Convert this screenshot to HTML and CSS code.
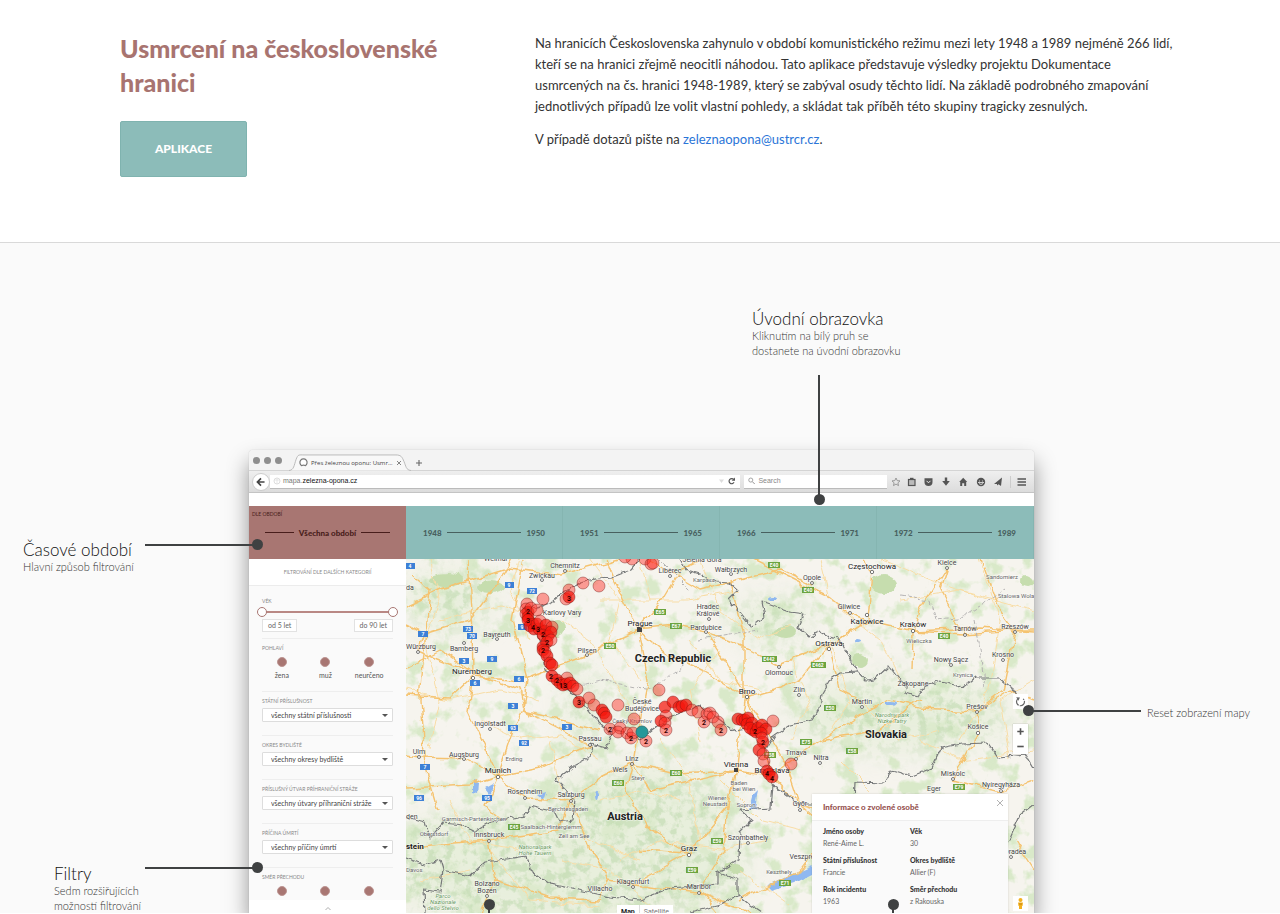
FILE: index.html
```html
<!DOCTYPE html>
<html lang="cs">
<head>
<meta charset="utf-8">
<title>Usmrcení na československé hranici</title>
<link rel="stylesheet" href="styles.css">
</head>
<body>
<header class="intro">
  <div class="intro-side">
    <h1>Usmrcení na československé hranici</h1>
    <a class="app-button" href="#aplikace">APLIKACE</a>
  </div>
  <div class="intro-text">
    <p>Na hranicích Československa zahynulo v období komunistického režimu mezi lety 1948 a 1989 nejméně 266 lidí,<br>
    kteří se na hranici zřejmě neocitli náhodou. Tato aplikace představuje výsledky projektu Dokumentace<br>
    usmrcených na čs. hranici 1948-1989, který se zabýval osudy těchto lidí. Na základě podrobného zmapování<br>
    jednotlivých případů lze volit vlastní pohledy, a skládat tak příběh této skupiny tragicky zesnulých.</p>
    <p>V případě dotazů pište na <a href="mailto:zeleznaopona@ustrcr.cz">zeleznaopona@ustrcr.cz</a>.</p>
  </div>
</header>

<main class="scene" id="aplikace">
  <div class="browser">
    <div class="tabbar">
      <span class="light"></span><span class="light"></span><span class="light"></span>
      <div class="tab">
        <svg class="tab-shape" viewBox="0 0 122 18" preserveAspectRatio="none"><path d="M0 17.5C5 17 5 12 7 6S10 1 15 1H107C112 1 113 3 115 8S117 17 122 17.5" fill="#f8f8f8" stroke="#b9b9b9"/></svg>
        <svg class="tab-icon" viewBox="0 0 10 10"><path d="M3 8.500A4 4 0 1 1 7 8.500L5 7.800Z" fill="#fff" stroke="#777" stroke-width="1.300"/></svg>
        <span class="tab-title">Přes železnou oponu: Usmr...</span>
        <svg class="tab-close" viewBox="0 0 6 6"><path d="M1 1L5 5M5 1L1 5" stroke="#777" stroke-width=".9"/></svg>
      </div>
      <svg class="tab-new" viewBox="0 0 8 8"><path d="M4 1V7M1 4H7" stroke="#666" stroke-width="1.100"/></svg>
    </div>
    <div class="toolbar">
      <button class="back" aria-label="Back"><svg viewBox="0 0 18 18"><path d="M9 5L5 9L9 13M5.500 9H13" fill="none" stroke="#444" stroke-width="1.900"/></svg></button>
      <div class="address">
        <svg viewBox="0 0 8 8"><circle cx="4" cy="4" r="3" fill="none" stroke="#ddd"/><path d="M1.500 3H6M4 1.500V6.500" stroke="#ddd" stroke-width=".7"/></svg>
        <span class="url">mapa.<b>zelezna-opona.cz</b></span>
        <svg class="end" viewBox="0 0 20 10"><path d="M2 3.500H7L4.500 7Z" fill="#ddd"/><path d="M16.700 3.500A2.600 2.600 0 1 0 17 6.300" fill="none" stroke="#555" stroke-width="1.200"/><path d="M18 1.500V4.800H14.700Z" fill="#555"/></svg>
      </div>
      <label class="search">
        <svg viewBox="0 0 8 8"><circle cx="3" cy="3" r="2.200" fill="none" stroke="#888" stroke-width=".8"/><path d="M4.800 4.800L7.300 7.300" stroke="#888"/></svg>
        <input type="text" placeholder="Search" aria-label="Search">
      </label>
      <svg class="tools" viewBox="0 0 144 20" fill="#555">
        <path d="M9 6L10.200 8.600L13 8.900L10.900 10.800L11.500 13.600L9 12.100L6.500 13.600L7.100 10.800L5 8.900L7.800 8.600Z" fill="none" stroke="#888" stroke-width=".8"/>
        <rect x="21.500" y="7.500" width="6.500" height="6" fill="#bbb" stroke="#555" stroke-width="1.200"/><rect x="23" y="5.800" width="3.500" height="2"/>
        <path d="M37.500 6.200H45.500V10A4 4 0 0 1 37.500 10Z"/><path d="M39.500 8.800L41.500 10.800L43.500 8.800" fill="none" stroke="#eee"/>
        <path d="M57.800 5.500H60.200V9H62.800L59 13.800L55.200 9H57.800Z"/>
        <path d="M72.200 10L76.200 5.800L80.200 10H79.200V14H77.200V11.200H75.200V14H73.200V10Z"/>
        <circle cx="94" cy="10" r="4.200"/><path d="M91 10.500H97M92.500 8.500V9.500M95.500 8.500V9.500M92 11.500Q94 13.500 96 11.500" stroke="#eee" stroke-width=".8" fill="none"/>
        <path d="M107 12L115 5.500L114 14L111.500 12.200L110 13.500V12Z"/>
        <path d="M123.500 4V16" stroke="#ccc"/>
        <path d="M130.500 7H139M130.500 10H139M130.500 13H139" stroke="#555" stroke-width="1.400"/>
      </svg>
    </div>
    <div class="white-strip"></div>

    <nav class="periods">
      <button class="period all"><small>DLE OBDOBÍ</small><i></i><b>Všechna období</b><i></i></button>
      <button class="period"><b>1948</b><i></i><b>1950</b></button>
      <button class="period"><b>1951</b><i></i><b>1965</b></button>
      <button class="period"><b>1966</b><i></i><b>1971</b></button>
      <button class="period"><b>1972</b><i></i><b>1989</b></button>
    </nav>

    <div class="work">
      <aside class="filters">
        <h2>FILTROVÁNÍ DLE DALŠÍCH KATEGORIÍ</h2>
        <div class="groups">
          <section class="group age">
            <h3>VĚK</h3>
            <div class="slider">
              <input type="range" min="5" max="90" value="5" aria-label="Věk od">
              <input type="range" min="5" max="90" value="90" aria-label="Věk do">
            </div>
            <div class="age-values"><span>od 5 let</span><span>do 90 let</span></div>
          </section>
          <section class="group">
            <h3>POHLAVÍ</h3>
            <div class="dots">
              <label><input type="checkbox" checked>žena</label>
              <label><input type="checkbox" checked>muž</label>
              <label><input type="checkbox" checked>neurčeno</label>
            </div>
          </section>
          <section class="group pick">
            <h3><label for="f1">STÁTNÍ PŘÍSLUŠNOST</label></h3>
            <select id="f1"><option>všechny státní příslušnosti</option></select>
          </section>
          <section class="group pick">
            <h3><label for="f2">OKRES BYDLIŠTĚ</label></h3>
            <select id="f2"><option>všechny okresy bydliště</option></select>
          </section>
          <section class="group pick">
            <h3><label for="f3">PŘÍSLUŠNÝ ÚTVAR PŘÍHRANIČNÍ STRÁŽE</label></h3>
            <select id="f3"><option>všechny útvary příhraniční stráže</option></select>
          </section>
          <section class="group pick">
            <h3><label for="f4">PŘÍČINA ÚMRTÍ</label></h3>
            <select id="f4"><option>všechny příčiny úmrtí</option></select>
          </section>
          <section class="group last">
            <h3>SMĚR PŘECHODU</h3>
            <div class="dots">
              <label><input type="checkbox" checked aria-label="Směr 1"></label>
              <label><input type="checkbox" checked aria-label="Směr 2"></label>
              <label><input type="checkbox" checked aria-label="Směr 3"></label>
            </div>
          </section>
        </div>
        <button class="more" aria-label="Více"><svg viewBox="0 0 8 5"><path d="M1.500 4L4 1.500L6.500 4" fill="none" stroke="#999" stroke-width=".8"/></svg></button>
      </aside>

      <div class="map">
        <svg class="map-art" viewBox="406 559 628 354" preserveAspectRatio="xMidYMid slice">
          <defs>
            <filter id="rough" x="-5%" y="-5%" width="110%" height="110%" color-interpolation-filters="sRGB"><feTurbulence type="fractalNoise" baseFrequency=".06" numOctaves="3" seed="4"/><feDisplacementMap in="SourceGraphic" scale="9" xChannelSelector="R" yChannelSelector="G"/></filter>
            <filter id="jag" x="-5%" y="-5%" width="110%" height="110%" color-interpolation-filters="sRGB"><feTurbulence type="fractalNoise" baseFrequency=".15" numOctaves="2" seed="8"/><feDisplacementMap in="SourceGraphic" scale="6" xChannelSelector="R" yChannelSelector="G"/></filter>
            <filter id="woods" x="0" y="0" width="100%" height="100%" color-interpolation-filters="sRGB"><feTurbulence type="fractalNoise" baseFrequency=".05" numOctaves="4" seed="12"/><feColorMatrix values="0 0 0 0 .78  0 0 0 0 .89  0 0 0 0 .7  6 0 0 0 -3.2"/></filter>
            <filter id="relief" x="0" y="0" width="100%" height="100%" color-interpolation-filters="sRGB"><feTurbulence type="fractalNoise" baseFrequency=".11" numOctaves="4" seed="3"/><feColorMatrix values="0 0 0 0 .74  0 0 0 0 .85  0 0 0 0 .68  5 0 0 0 -2.300"/></filter>
            <filter id="soft"><feGaussianBlur stdDeviation="14"/></filter>
            <mask id="hills"><g fill="#fff" filter="url(#soft)"><ellipse cx="560" cy="865" rx="190" ry="62"/><ellipse cx="450" cy="600" rx="45" ry="30"/><ellipse cx="900" cy="715" rx="110" ry="36"/><ellipse cx="640" cy="810" rx="90" ry="45"/><ellipse cx="585" cy="710" rx="18" ry="40"/><ellipse cx="770" cy="620" rx="40" ry="20"/></g></mask>
          </defs>
          <rect x="406" y="559" width="628" height="354" fill="#f6f4ee"/>
          <rect x="406" y="559" width="628" height="354" filter="url(#woods)" opacity=".6"/>
          <g mask="url(#hills)"><rect x="406" y="559" width="628" height="354" fill="#dfebd1" opacity=".6"/><rect x="406" y="559" width="628" height="354" filter="url(#relief)" opacity=".6"/></g>
          <g fill="#c6ddae" filter="url(#rough)">
            <ellipse cx="447" cy="580" rx="17" ry="8"/><ellipse cx="490" cy="588" rx="14" ry="7"/><ellipse cx="884" cy="585" rx="13" ry="9"/><ellipse cx="556" cy="628" rx="8" ry="8"/><ellipse cx="860" cy="661" rx="8" ry="7"/><ellipse cx="734" cy="868" rx="10" ry="5"/><ellipse cx="1027" cy="582" rx="7" ry="5"/><ellipse cx="785" cy="632" rx="12" ry="6"/>
          </g>
          <g fill="#8fb8f0" filter="url(#rough)"><path d="M759 791L753 797L750 808L756 806Z"/><path d="M766 886L790 874L814 864V872L792 883L770 890Z"/><path d="M536 793L546 790L543 799Z"/><path d="M474 782L479 784L478 795L474 794ZM484 788L493 783L488 793Z"/><ellipse cx="858" cy="641" rx="4" ry="2"/><ellipse cx="891" cy="704" rx="5" ry="2"/><ellipse cx="596" cy="795" rx="2" ry="5"/><ellipse cx="774" cy="598" rx="5" ry="2"/></g>
          <g class="minor" filter="url(#rough)">
            <path d="M406 690L450 700L500 690L540 700M430 559L440 600L425 640L440 700L430 750M480 720L520 740L560 735L600 760M560 620L590 640L620 690L640 720M600 600L640 600L690 600L740 590M690 640L720 680L760 690M700 560L720 610L760 640L790 625M820 559L830 600L880 640L900 680M900 600L960 590L1034 610M980 559L1000 620L990 690L960 740M860 700L900 740L940 730M840 760L870 790M660 740L690 780L700 840M620 860L660 840L720 850L770 840M720 780L760 820L800 830M450 800L470 840L520 850M550 740L560 790L590 840L640 860M640 560L650 600M440 620L500 605L540 620M880 559L930 580L990 600M740 870L790 905M490 850L530 900L600 905"/>
            <path d="M520 559L510 590L530 640M590 559L620 600L610 640L640 680M720 650L690 690L700 740M790 660L810 700L790 740M920 740L960 760L1034 750M1034 680L1000 700L1010 760M420 880L470 870M560 860L610 870L650 905M680 800L640 790L600 800M830 640L850 700L830 730"/>
          </g>
          <g class="major" filter="url(#rough)">
            <path d="M406 606L440 590L510 568L560 575L620 559M406 625L424 634L470 620L500 580L512 559M412 575L430 590L425 640L420 700L425 767L438 812M406 668L440 650L473 673L520 690L524 710M424 634L418 650L473 673L468 710L498 776M468 559L472 630L473 673M524 559L512 620L527 680L523 711L513 730L498 776M406 695L450 698L473 676L520 680L587 655L638 630"/>
            <path d="M406 755L419 757L464 758L498 776L540 768L590 745L523 711L600 730M498 776L470 785L406 788M498 776L485 805L500 820M498 776L525 798L571 800L600 778L632 763L676 773L736 770L772 775L800 804L854 820"/>
            <path d="M638 630L614 580L606 559M638 630L662 600L680 570L704 559M638 630L676 626L706 632L750 650L779 665L829 645L867 620M638 630L665 653L705 672L747 697L780 688L800 680L829 645M638 630L648 680L642 710L634 763M747 697L740 730L736 770L728 805L724 850L700 890L718 913M747 697L762 740L772 775L796 757L820 740L852 720L890 700L920 708L976 711L1010 690L1034 700"/>
            <path d="M750 559L790 578L830 598L850 614L867 620L913 631L964 634L1015 630L1034 630M872 572L868 620L829 645M872 572L860 559M947 567L920 610L913 631L912 670M947 567L940 590L965 634M982 559L1000 610L1015 631L1003 690L976 711L978 732L953 780M913 631L980 628L1034 632M744 700L744 640L730 580"/>
            <path d="M571 800L590 850L610 880L633 885L689 853L728 805M610 880L600 900M633 885L699 893L750 913M571 800L560 830L489 840L430 845L406 850M489 840L495 880L480 913M632 763L625 790L650 830L689 853L640 850M736 770L650 790L632 763M800 804L830 830L800 870L740 900"/>
            <path d="M650 560L700 590L780 570L812 585M953 780L1000 792L1034 780M820 740L880 730L920 700M862 700L840 690L829 645M1015 840L1034 870M706 632L747 697M600 900L550 898L495 880M800 804L785 760L747 697"/>
          </g>
          <g class="border" filter="url(#jag)">
            <path d="M527 607L537 608L552 602L560 595L580 582L600 578L612 577L630 570L640 559M680 559L686 570L700 574L715 582L730 583L738 590L728 600L740 612L752 627L765 617L762 602L790 612L804 614L798 627L810 637L820 631L830 637L840 640L848 655L858 672L866 681L874 680L889 666L898 678L907 682L905 693L918 697L924 687L940 681L955 684L962 688L975 678L1000 678L1012 688L1017 697"/>
            <path d="M859 672L840 673L830 680L822 694L820 708L812 720L790 725L775 735L766 750L772 785L785 793L800 804L854 804L855 782L885 783L892 770L912 776L932 768L941 748L960 744L988 743L998 758L1025 755L1034 770M773 785L771 808L740 810L752 820L740 832L739 860L718 872L718 884L670 888L640 900L610 897L550 884L530 870L527 856L485 862L470 876L443 870L440 860L425 865L406 858M443 870L440 892L424 890L425 913M718 872L738 880L738 895L750 905L762 913M1034 804L1020 815L1008 842M690 913L720 905L738 895"/>
            <path d="M406 817L425 822L430 838L443 823L462 825L475 831L490 822L525 816L530 806L555 812L560 822L573 820L575 800L556 780L575 765L590 757L592 744L606 748L612 735L592 715L580 700L545 670L540 640L527 607M612 728L640 740L668 718L700 705L735 731L770 725"/>
          </g>
          <path d="M660 560L690 590M900 595L930 600L936 620L960 618L990 600L1005 590M974 620L980 650L985 690M560 690L600 680L650 690L690 660M700 640L760 630" fill="none" stroke="#b5b3b3" stroke-dasharray="4 2" filter="url(#rough)"/>

          <g class="shields">
            <path class="blue" d="M406 563h9v6h-9zM505 582h9v6h-9zM527 588h10v6h-10zM418 631h10v6h-10zM463 626h10v6h-10zM467 633h10v6h-10zM459 658h10v6h-10zM487 656h10v6h-10zM470 680h10v6h-10zM514 676h10v6h-10zM508 703h10v6h-10zM508 725h10v6h-10zM562 724h10v6h-10zM518 624h9v6h-9zM519 740h10v6h-10zM420 764h10v6h-10zM414 795h10v6h-10zM482 795h10v6h-10z"/>
            <path class="green" d="M604 643h12v6h-12zM654 609h12v6h-12zM670 623h12v6h-12zM768 562h12v6h-12zM802 587h12v6h-12zM762 656h15v6h-15zM811 662h15v6h-15zM938 633h12v6h-12zM824 705h12v6h-12zM508 824h12v6h-12zM670 770h12v6h-12zM612 780h12v6h-12zM711 838h12v6h-12zM686 867h12v6h-12zM800 739h12v6h-12zM779 880h12v6h-12zM764 752h12v6h-12zM846 748h12v6h-12zM953 784h12v6h-12z"/>
            <g class="num"><text x="410" y="568">4</text><text x="509" y="587">9</text><text x="532" y="593">72</text><text x="423" y="636">7</text><text x="468" y="631">73</text><text x="472" y="638">70</text><text x="464" y="663">3</text><text x="492" y="661">9</text><text x="475" y="685">6</text><text x="519" y="681">6</text><text x="513" y="708">3</text><text x="513" y="730">93</text><text x="567" y="729">3</text><text x="522" y="629">9</text><text x="524" y="745">92</text><text x="425" y="769">7</text><text x="419" y="800">96</text><text x="487" y="800">95</text><text x="610" y="648">E50</text><text x="660" y="614">E65</text><text x="676" y="628">E67</text><text x="774" y="567">E40</text><text x="808" y="592">E40</text><text x="769" y="661">E442</text><text x="818" y="667">E462</text><text x="944" y="638">E40</text><text x="830" y="710">E50</text><text x="514" y="829">E45</text><text x="676" y="775">E60</text><text x="618" y="785">E60</text><text x="717" y="843">E59</text><text x="692" y="872">E59</text><text x="806" y="744">E75</text><text x="785" y="885">E71</text><text x="770" y="757">E58</text><text x="852" y="753">E58</text><text x="959" y="789">E79</text></g>
          </g>

          <g class="towns">
            <circle cx="542" cy="580" r="1.500"/><circle cx="565" cy="571" r="1.500"/><circle cx="497" cy="639" r="1.500"/><circle cx="418" cy="652" r="1.500"/><circle cx="464" cy="643" r="1.500"/><circle cx="473" cy="678" r="1.700"/><circle cx="587" cy="655" r="1.500"/><circle cx="490" cy="729" r="1.500"/><circle cx="670" cy="576" r="1.500"/><circle cx="731" cy="574" r="1.500"/><circle cx="812" cy="583" r="1.500"/><circle cx="709" cy="619" r="1.500"/><circle cx="706" cy="632" r="1.500"/><circle cx="779" cy="667" r="1.500"/><circle cx="747" cy="697" r="1.700"/><circle cx="799" cy="695" r="1.500"/><circle cx="829" cy="649" r="1.700"/><circle cx="872" cy="572" r="1.700"/><circle cx="947" cy="568" r="1.500"/><circle cx="850" cy="613" r="1.500"/><circle cx="867" cy="615" r="1.700"/><circle cx="913" cy="631" r="1.700"/><circle cx="965" cy="635" r="1.500"/><circle cx="1015" cy="632" r="1.500"/><circle cx="951" cy="665" r="1.500"/><circle cx="1003" cy="660" r="1.500"/><circle cx="977" cy="712" r="1.500"/><circle cx="978" cy="733" r="1.700"/><circle cx="862" cy="707" r="1.500"/><circle cx="590" cy="745" r="1.500"/><circle cx="419" cy="757" r="1.500"/><circle cx="464" cy="759" r="1.500"/><circle cx="498" cy="777" r="1.700"/><circle cx="525" cy="798" r="1.500"/><circle cx="571" cy="801" r="1.500"/><circle cx="489" cy="841" r="1.500"/><circle cx="487" cy="896" r="1.500"/><circle cx="632" cy="764" r="1.500"/><circle cx="689" cy="855" r="1.700"/><circle cx="633" cy="887" r="1.500"/><circle cx="699" cy="893" r="1.500"/><circle cx="748" cy="843" r="1.500"/><circle cx="796" cy="759" r="1.500"/><circle cx="820" cy="763" r="1.500"/><circle cx="953" cy="779" r="1.500"/><circle cx="1001" cy="791" r="1.500"/><circle cx="1011" cy="857" r="1.500"/><circle cx="800" cy="810" r="1.500"/>
            <path d="M637 627h5v5h-5zM734 768h4v4h-4z" class="capital"/>
          </g>
          <g class="label">
            <text x="496" y="561">Weimar</text><text x="542" y="578">Zwickau</text><text x="565" y="568">Chemnitz</text><text x="406" y="590" class="start">da</text><text x="562" y="615">Karlovy Vary</text><text x="497" y="637">Bayreuth</text><text x="406" y="649" class="start">Würzburg</text><text x="464" y="651">Bamberg</text><text x="587" y="653">Pilsen</text><text x="490" y="726">Ingolstadt</text><text x="670" y="573">Liberec</text><text x="702" y="562">Jelenia Góra</text><text x="731" y="572">Wałbrzych</text><text x="812" y="580">Opole</text><text x="708" y="609">Hradec</text><text x="708" y="616">Králové</text><text x="706" y="630">Pardubice</text><text x="779" y="675">Olomouc</text><text x="799" y="692">Zlín</text><text x="642" y="704">České</text><text x="642" y="711">Budějovice</text><text x="947" y="565">Kielce</text><text x="849" y="609">Gliwice</text><text x="965" y="631">Tarnów</text><text x="1015" y="629">Rzeszów</text><text x="951" y="662">Nowy Sącz</text><text x="1003" y="657">Krosno</text><text x="913" y="686">Zakopane</text><text x="862" y="704">Martin</text><text x="977" y="709">Prešov</text><text x="978" y="729">Košice</text><text x="590" y="741">Passau</text><text x="419" y="754">Ulm</text><text x="464" y="757">Augsburg</text><text x="525" y="794">Rosenheim</text><text x="571" y="797">Salzburg</text><text x="489" y="837">Innsbruck</text><text x="487" y="886">Bolzano</text><text x="487" y="893">Bozen</text><text x="600" y="891">Villacho</text><text x="632" y="761">Linz</text><text x="620" y="772">Wels</text><text x="748" y="840">Szombathely</text><text x="633" y="884">Klagenfurt</text><text x="699" y="889">Maribor</text><text x="800" y="806">Győr</text><text x="796" y="755">Trnava</text><text x="821" y="760">Nitra</text><text x="805" y="859">Veszprém</text><text x="953" y="776">Miskolc</text><text x="934" y="791">Eger</text><text x="1001" y="787">Nyíregyháza</text><text x="1015" y="854">Oradea</text><text x="406" y="819" class="start">den</text>
          </g>
          <g class="label tiny">
            <text x="704" y="582">Karpacz</text><text x="632" y="723">Český Krumlov</text><text x="1002" y="579">Sandomierz</text><text x="998" y="598" class="start">Stalowa Wola</text><text x="919" y="643">Wieliczka</text><text x="963" y="677">Krynica</text><text x="514" y="761">Erding</text><text x="568" y="811">Berchtesgaden</text><text x="474" y="821">Garmisch-Partenkirchen</text><text x="434" y="836">Oberstdorf</text><text x="551" y="829">Saalbach-Hinterglemm</text><text x="574" y="838">Zell am See</text><text x="406" y="872" class="start">Davos</text><text x="638" y="780">Steyr</text><text x="739" y="785">Baden</text><text x="744" y="791">bei Wien</text><text x="717" y="800">Wiener</text><text x="715" y="806">Neustadt</text><text x="746" y="807">Sopron</text><text x="779" y="874">Keszthely</text>
          </g>
          <g class="label park"><text x="892" y="717">Narodny park</text><text x="892" y="723">Nizke Tatry</text><text x="535" y="849">Nationalpark</text><text x="535" y="855">Hohe Tauern</text><text x="443" y="898">Parco</text><text x="443" y="904">Nazionale</text><text x="443" y="910">dello Stelvio</text></g>
          <g class="label city"><text x="472" y="674">Nuremberg</text><text x="640" y="626">Prague</text><text x="747" y="694">Brno</text><text x="829" y="646">Ostrava</text><text x="872" y="569">Częstochowa</text><text x="867" y="624">Katowice</text><text x="913" y="627">Kraków</text><text x="498" y="773">Munich</text><text x="736" y="767">Vienna</text><text x="772" y="773">Bratislava</text><text x="689" y="851">Graz</text></g>
          <g class="label country"><text x="673" y="662">Czech Republic</text><text x="886" y="738">Slovakia</text><text x="625" y="820">Austria</text><text x="406" y="849" class="start small">stein</text></g>

          <g class="marks">
            <circle cx="632" cy="559" r="6"/><circle cx="625" cy="557" r="6"/><circle cx="645" cy="559" r="6"/><circle cx="651" cy="564" r="6"/><circle cx="653" cy="563" r="6"/><circle cx="527" cy="604" r="6"/><circle cx="526" cy="609" r="6"/><circle cx="528" cy="612" r="6" class="hot"/><circle cx="526" cy="614" r="6"/><circle cx="531" cy="608" r="6"/><circle cx="543" cy="599" r="6"/><circle cx="537" cy="610" r="6"/><circle cx="569" cy="590" r="6"/><circle cx="566" cy="599" r="6"/><circle cx="569" cy="597" r="6" class="hot"/><circle cx="583" cy="583" r="6"/><circle cx="599" cy="586" r="6"/>
            <circle cx="528" cy="617" r="6" class="hot"/><circle cx="528" cy="620" r="6" class="hot"/><circle cx="533" cy="624" r="6" class="hot"/><circle cx="530" cy="626" r="6" class="hot"/><circle cx="534" cy="629" r="6" class="hot"/><circle cx="539" cy="629" r="6" class="hot"/><circle cx="537" cy="624" r="6" class="hot"/><circle cx="540" cy="621" r="6"/><circle cx="545" cy="631" r="6" class="hot"/><circle cx="546" cy="625" r="6" class="hot"/><circle cx="552" cy="627" r="6"/><circle cx="543" cy="635" r="6" class="hot"/><circle cx="548" cy="636" r="6" class="hot"/><circle cx="551" cy="632" r="6" class="hot"/><circle cx="547" cy="642" r="6" class="hot"/><circle cx="551" cy="640" r="6"/><circle cx="543" cy="647" r="6" class="hot"/><circle cx="543" cy="650" r="6" class="hot"/><circle cx="545" cy="652" r="6"/><circle cx="547" cy="656" r="6" class="hot"/><circle cx="550" cy="663" r="6" class="hot"/><circle cx="552" cy="665" r="6" class="hot"/><circle cx="552" cy="676" r="6" class="hot"/><circle cx="557" cy="680" r="6" class="hot"/><circle cx="560" cy="683" r="6" class="hot"/><circle cx="563" cy="685" r="6" class="hot"/><circle cx="567" cy="678" r="6"/><circle cx="566" cy="684" r="6" class="hot"/><circle cx="570" cy="683" r="6" class="hot"/><circle cx="573" cy="686" r="6" class="hot"/><circle cx="577" cy="689" r="6"/><circle cx="579" cy="702" r="6" class="hot"/>
            <circle cx="589" cy="698" r="6"/><circle cx="594" cy="705" r="6"/><circle cx="602" cy="710" r="6" class="hot"/><circle cx="604" cy="713" r="6" class="hot"/><circle cx="606" cy="717" r="6" class="hot"/><circle cx="610" cy="729" r="6"/><circle cx="618" cy="705" r="6"/><circle cx="620" cy="728" r="6"/><circle cx="618" cy="732" r="6"/><circle cx="634" cy="719" r="6"/><circle cx="627" cy="733" r="6"/><circle cx="631" cy="738" r="6"/><circle cx="633" cy="733" r="6"/><circle cx="646" cy="741" r="6"/><circle cx="659" cy="690" r="6"/><circle cx="665" cy="707" r="6" class="hot"/><circle cx="673" cy="702" r="6" class="hot"/><circle cx="679" cy="707" r="6" class="hot"/><circle cx="682" cy="706" r="6" class="hot"/><circle cx="686" cy="705" r="6" class="hot"/><circle cx="692" cy="710" r="6"/><circle cx="698" cy="712" r="6"/><circle cx="704" cy="722" r="6"/><circle cx="707" cy="714" r="6"/><circle cx="710" cy="713" r="6"/><circle cx="713" cy="717" r="6"/><circle cx="718" cy="722" r="6"/><circle cx="721" cy="730" r="6"/><circle cx="666" cy="716" r="6"/><circle cx="661" cy="721" r="6" class="hot"/><circle cx="665" cy="723" r="6"/><circle cx="666" cy="730" r="6"/>
            <circle cx="738" cy="719" r="6" class="hot"/><circle cx="742" cy="720" r="6" class="hot"/><circle cx="745" cy="720" r="6" class="hot"/><circle cx="748" cy="718" r="6" class="hot"/><circle cx="747" cy="724" r="6" class="hot"/><circle cx="752" cy="723" r="6" class="hot"/><circle cx="753" cy="730" r="6" class="hot"/><circle cx="750" cy="728" r="6" class="hot"/><circle cx="756" cy="732" r="6" class="hot"/><circle cx="758" cy="728" r="6" class="hot"/><circle cx="762" cy="725" r="6" class="hot"/><circle cx="766" cy="729" r="6" class="hot"/><circle cx="761" cy="733" r="6" class="hot"/><circle cx="773" cy="721" r="6"/><circle cx="763" cy="742" r="6" class="hot"/><circle cx="762" cy="738" r="6"/><circle cx="759" cy="750" r="6" class="hot"/><circle cx="763" cy="754" r="6"/><circle cx="764" cy="761" r="6"/><circle cx="767" cy="771" r="6" class="hot"/><circle cx="769" cy="774" r="6" class="hot"/><circle cx="772" cy="777" r="6" class="hot"/><circle cx="791" cy="764" r="6"/>
            <circle cx="642" cy="732" r="6" class="chosen"/>
          </g>
          <g class="count"><text x="528" y="614">2</text><text x="528" y="623">3</text><text x="533" y="630">4</text><text x="538" y="632">3</text><text x="543" y="637">2</text><text x="547" y="645">2</text><text x="569" y="601">3</text><text x="543" y="653">2</text><text x="551" y="679">2</text><text x="557" y="683">2</text><text x="563" y="688">13</text><text x="579" y="705">3</text><text x="610" y="732">2</text><text x="631" y="741">2</text><text x="646" y="744">2</text><text x="666" y="733">2</text><text x="704" y="725">2</text><text x="721" y="733">2</text><text x="755" y="734">2</text><text x="763" y="745">2</text><text x="767" y="776">4</text><text x="772" y="781">4</text></g>
        </svg>

        <div class="map-controls">
          <button aria-label="Reset zobrazení mapy"><svg viewBox="0 0 14 14"><path d="M4.500 4.500A3.700 3.700 0 1 0 9.500 4.500" fill="none" stroke="#666" stroke-width="1.100" stroke-dasharray="7 1"/><path d="M3 3L6.500 3.200L5 6.200Z" fill="#666"/></svg></button>
          <div class="zoom">
            <button aria-label="Přiblížit"><svg viewBox="0 0 14 14"><path d="M7 4V10M4 7H10" stroke="#555" stroke-width="1.500"/></svg></button>
            <button aria-label="Oddálit"><svg viewBox="0 0 14 14"><path d="M4 7H10" stroke="#555" stroke-width="1.500"/></svg></button>
          </div>
        </div>
        <div class="map-type"><button class="on">Map</button><button>Satellite</button></div>
        <button class="pegman" aria-label="Street View"><svg viewBox="0 0 15 15"><circle cx="7.500" cy="4" r="2" fill="#f2b01e"/><path d="M5 6.500H10L9.500 10H9V13H6V10H5.500Z" fill="#f2b01e"/><path d="M6 8H9" stroke="#c4820f"/></svg></button>
        <section class="info">
          <header><h2>Informace o zvolené osobě</h2><button aria-label="Zavřít"><svg viewBox="0 0 8 8"><path d="M1 1L7 7M7 1L1 7" stroke="#aaa" stroke-width=".9"/></svg></button></header>
          <dl>
            <div><dt>Jméno osoby</dt><dd>René-Aime L.</dd></div>
            <div><dt>Věk</dt><dd>30</dd></div>
            <div><dt>Státní příslušnost</dt><dd>Francie</dd></div>
            <div><dt>Okres bydliště</dt><dd>Allier (F)</dd></div>
            <div><dt>Rok incidentu</dt><dd>1963</dd></div>
            <div><dt>Směr přechodu</dt><dd>z Rakouska</dd></div>
          </dl>
        </section>
      </div>
    </div>
  </div>

  <div class="note note-home"><h2>Úvodní obrazovka</h2><p>Kliknutím na bílý pruh se<br>dostanete na úvodní obrazovku</p></div>
  <div class="note note-period"><h2>Časové období</h2><p>Hlavní způsob filtrování</p></div>
  <div class="note note-filters"><h2>Filtry</h2><p>Sedm rozšiřujících<br>možností filtrování</p></div>
  <div class="note note-reset"><p>Reset zobrazení mapy</p></div>
  <span class="pin down pin-home"></span>
  <span class="pin right pin-period"></span>
  <span class="pin right pin-filters"></span>
  <span class="pin left pin-reset"></span>
  <span class="pin up pin-map"></span>
  <span class="pin up pin-info"></span>
</main>
</body>
</html>
```
FILE: styles.css
```css
* { box-sizing: border-box; }
body { margin: 0; background: #fff; color: #333; font-family: Lato, "Open Sans", sans-serif; }
h1, h2, h3, p, dl, dd { margin: 0; }
button { border: 0; padding: 0; margin: 0; background: none; font: inherit; color: inherit; cursor: pointer; }
svg { display: block; }

/* Intro */
.intro { display: grid; grid-template-columns: 345px 1fr; column-gap: 70px; padding: 31px 120px 65px; border-bottom: 1px solid #d9d9d9; }
.intro h1 { font-size: 25px; line-height: 34px; font-weight: 900; color: #a87470; }
.app-button { display: inline-flex; align-items: center; justify-content: center; width: 127px; height: 56px; margin-top: 22px; padding-bottom: 2px; background: #8cbcb9; border: 1px solid #7fb3af; border-radius: 2px; color: #fff; font-size: 12px; font-weight: 900; text-decoration: none; }
.intro-text { padding-top: 2px; font-size: 13px; line-height: 21px; white-space: nowrap; }
.intro-text p + p { margin-top: 12px; }
.intro-text a { color: #2a75d8; text-decoration: none; }

/* Illustrated guide */
.scene { position: relative; padding: 207px 246px 0 249px; background: #fafafa; overflow: hidden; }
.browser { background: #fff; border-radius: 4px 4px 0 0; box-shadow: 0 12px 22px rgba(0, 0, 0, .42), 0 0 1px rgba(0, 0, 0, .3); }

.tabbar { display: flex; align-items: center; height: 21px; padding-left: 4px; gap: 4px; background: #f3f3f3; border-radius: 4px 4px 0 0; border-bottom: 1px solid #d4d4d4; }
.light { width: 7px; height: 7px; border-radius: 50%; background: #8e8e8e; }
.tab { position: relative; display: flex; align-items: center; align-self: flex-end; gap: 3px; width: 122px; height: 17px; padding: 0 10px 0 10px; margin-left: 3px; margin-bottom: -1px; }
.tab-shape { position: absolute; inset: 0; width: 100%; height: 100%; }
.tab-icon, .tab-title, .tab-close { position: relative; flex: none; }
.tab-icon { width: 9px; height: 9px; }
.tab-title { flex: 1; font: 6px/10px "Open Sans", sans-serif; color: #444; white-space: nowrap; }
.tab-close { width: 6px; height: 6px; }
.tab-new { width: 8px; height: 8px; margin-top: 5px; }

.toolbar { display: flex; align-items: center; height: 22px; padding-left: 3px; background: linear-gradient(#efefef, #dcdcdc); border-bottom: 1px solid #c4c4c4; }
.back { width: 18px; height: 18px; border: 1px solid #ccc; border-radius: 50%; background: #fff; }
.back svg { width: 16px; height: 16px; }
.address, .search { display: flex; align-items: center; height: 14px; background: #fff; border-bottom: 1px solid #bbb; }
.address { flex: 1; gap: 2px; padding-left: 3px; }
.address > svg { width: 8px; height: 8px; }
.url { flex: 1; font: 7px/10px "Liberation Sans", sans-serif; color: #777; }
.url b { font-weight: 400; color: #111; }
.address .end { width: 20px; height: 10px; margin-right: 3px; }
.search { width: 143px; margin-left: 4px; padding-left: 4px; gap: 3px; }
.search svg { width: 8px; height: 8px; }
.search input { width: 100%; border: 0; padding: 0; outline: 0; background: none; font: 7px/10px "Liberation Sans", sans-serif; }
.search input::placeholder { color: #888; }
.tools { width: 144px; height: 20px; margin-right: 3px; }
.white-strip { height: 13px; }

.periods { display: grid; grid-template-columns: repeat(5, 1fr); height: 53px; }
.period { position: relative; display: flex; align-items: center; gap: 5px; padding: 0 17px; background: #8cbcb9; border-right: 1px solid #85b5b1; color: #48605f; font-size: 8px; }
.period i { flex: 1; height: 1px; background: #48605f; }
.period b { font-weight: 900; }
.period.all { padding: 0 16px; border: 0; background: #a87672; color: #481d1b; }
.period.all i { background: #481d1b; }
.period small { position: absolute; left: 3px; top: 5px; font-size: 5px; line-height: 6px; }

.work { display: grid; grid-template-columns: 157px 1fr; height: 354px; overflow: hidden; }
.filters { display: flex; flex-direction: column; height: 354px; overflow: hidden; background: #fafafa; }
.filters h2 { flex: none; height: 26px; line-height: 26px; background: #fff; text-align: center; font-size: 5px; font-weight: 400; color: #888; }
.groups { flex: 1; min-height: 0; overflow: hidden; border-top: 1px solid #ececec; padding: 0 13px; }
.group { padding: 5px 0 11px; border-top: 1px solid #eee; }
.group.age { border: 0; padding: 11px 0 6px; }
.group.pick { padding-bottom: 13px; }
.group h3 { font-size: 5px; line-height: 8px; font-weight: 400; color: #888; }
.slider { position: relative; height: 14px; margin: 0 -5px; background: linear-gradient(#b98884, #b98884) center / calc(100% - 16px) 2px no-repeat; }
.slider input { position: absolute; inset: 0; width: 100%; height: 14px; margin: 0; appearance: none; background: none; pointer-events: none; }
.slider input::-webkit-slider-thumb { appearance: none; width: 10px; height: 10px; border: 1px solid #a87672; border-radius: 50%; background: #fff; pointer-events: auto; }
.age-values { display: flex; justify-content: space-between; }
.age-values span { height: 13px; padding: 0 5px; border: 1px solid #e2e2e2; background: #fff; font-size: 7px; line-height: 11px; color: #666; }
.dots { display: grid; grid-template-columns: repeat(3, 1fr); margin: 5px 2px 0 -2px; }
.dots label { display: grid; justify-items: center; gap: 3px; font-size: 7px; line-height: 10px; color: #555; }
.dots input { appearance: none; width: 10px; height: 10px; margin: 0; border-radius: 50%; border: 1px solid #bd9693; background: #a87672; }
.pick select { display: block; appearance: none; width: 100%; height: 14px; margin-top: 3px; padding: 0 8px; border: 1px solid #ddd; border-radius: 1px; font: 7px/11px Lato, sans-serif; color: #444; background: #fff; }
.pick { position: relative; }
.pick::after { content: ""; position: absolute; right: 5px; bottom: 18px; border: 3px solid transparent; border-top-color: #555; border-bottom: 0; pointer-events: none; }
.more { flex: none; display: flex; justify-content: center; align-items: center; height: 13px; background: #fff; padding-top: 4px; }
.more svg { width: 8px; height: 5px; }

/* Map */
.map { position: relative; height: 354px; overflow: hidden; }
.map-art { width: 100%; height: 100%; }
.minor, .major, .border { fill: none; stroke-linejoin: round; }
.minor { stroke: #f8dda6; stroke-width: 1; }
.major { stroke: #f5c370; stroke-width: 1.4; }
.border { stroke: #77797a; stroke-width: 1.2; }
.blue { fill: #3d80d6; }
.green { fill: #6ba43f; }
.num text { font: 700 5px Roboto, sans-serif; fill: #fff; text-anchor: middle; }
.towns circle { fill: #fff; stroke: #555; stroke-width: .8; }
.capital { fill: #444; }
.label text { font: 7px Roboto, sans-serif; fill: #444; text-anchor: middle; stroke: rgba(255, 255, 255, .7); stroke-width: 1px; paint-order: stroke; }
.label.tiny text { font-size: 6px; fill: #666; }
.label.park text { font-size: 6px; font-style: italic; fill: #699961; }
.label.city text { font-size: 8px; fill: #222; }
.label.country text { font-size: 11px; font-weight: 700; fill: #222; }
.label.country .small { font-size: 8px; }
.label .start { text-anchor: start; }
.marks circle { fill: rgba(255, 45, 35, .45); stroke: rgba(110, 20, 15, .5); stroke-width: .8; }
.marks .hot { fill: rgba(244, 22, 12, .72); }
.marks .chosen { fill: #26989a; stroke: #276b6b; }
.count text { font: 700 7px Roboto, sans-serif; fill: #300; text-anchor: middle; }

.map-controls { position: absolute; top: 135px; right: 6px; display: grid; gap: 15px; }
.map-controls button { display: block; width: 15px; height: 15px; background: #fff; }
.map-controls svg { width: 15px; height: 15px; }
.zoom { box-shadow: 0 0 1px rgba(0, 0, 0, .4); }
.map-type { position: absolute; left: 211px; bottom: -6px; display: flex; background: #fff; font: 7px/14px Roboto, sans-serif; color: #777; }
.map-type button { padding: 0 4px; }
.map-type .on { font-weight: 700; color: #222; border-right: 1px solid #ddd; }
.pegman { position: absolute; right: 6px; bottom: 2px; width: 15px; height: 15px; background: #fff; }
.info { position: absolute; right: 26px; top: 235px; width: 196px; height: 130px; background: #fafafa; box-shadow: 0 0 2px rgba(0, 0, 0, .15); }
.info header { display: flex; align-items: center; height: 27px; padding: 0 4px 0 11px; background: #fff; border-bottom: 1px solid #eee; }
.info h2 { flex: 1; font-size: 8px; font-weight: 900; color: #95514e; }
.info header button { margin-bottom: 8px; }
.info header svg { width: 8px; height: 8px; }
.info dl { display: grid; grid-template-columns: 87px 1fr; row-gap: 5px; padding: 4px 11px; font-size: 7px; line-height: 12px; }
.info dt { font-weight: 900; color: #333; }
.info dd { color: #666; }

/* Notes around the window */
.note { position: absolute; color: #333; font-size: 11px; line-height: 15px; font-weight: 300; }
.note h2 { font-size: 17px; line-height: 19px; font-weight: 300; color: #111; }
.note-home { left: 58.75%; top: 66px; }
.note-period { left: 23px; top: 297px; }
.note-filters { left: 54px; top: 621px; }
.note-reset { right: 30px; top: 462px; }
.pin { position: absolute; background: #3f4142; }
.pin::after { content: ""; position: absolute; width: 11px; height: 11px; border-radius: 50%; background: #3f4142; }
.pin.down, .pin.up { width: 2px; }
.pin.right, .pin.left { height: 2px; width: 113px; }
.pin.down::after { left: -4px; bottom: -5px; }
.pin.up::after { left: -4px; top: -5px; }
.pin.right::after { right: -5px; top: -5px; }
.pin.left::after { left: -5px; top: -5px; }
.pin-home { left: 63.9%; top: 132px; height: 125px; }
.pin-period { left: 145px; top: 301px; }
.pin-filters { left: 145px; top: 624px; }
.pin-reset { right: 139px; top: 467px; }
.pin-map { left: 38.125%; top: 661px; bottom: 0; }
.pin-info { left: 69.7%; top: 661px; bottom: 0; }
```
